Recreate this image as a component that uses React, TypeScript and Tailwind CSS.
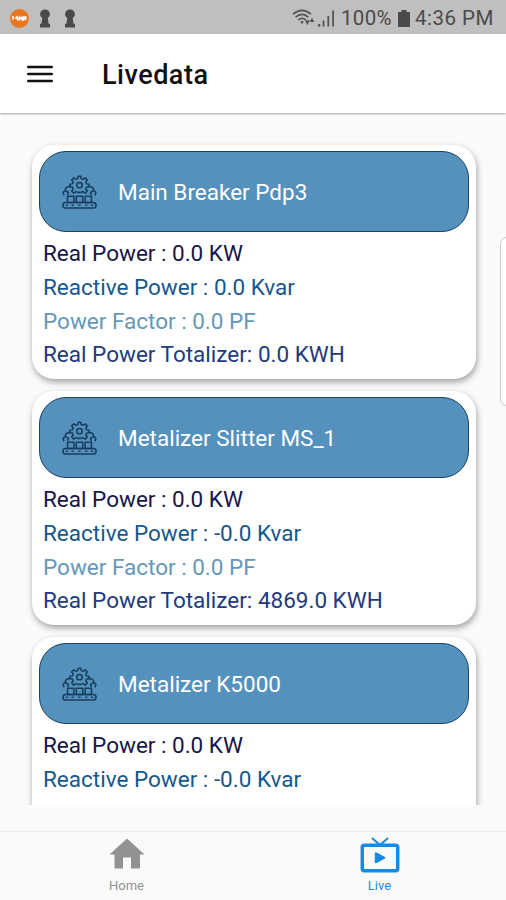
interface Meter {
  name: string;
  realPower: string;
  reactivePower: string;
  powerFactor: string;
  totalizer: string;
}

const meters: Meter[] = [
  {
    name: "Main Breaker Pdp3",
    realPower: "0.0 KW",
    reactivePower: "0.0 Kvar",
    powerFactor: "0.0 PF",
    totalizer: "0.0 KWH",
  },
  {
    name: "Metalizer Slitter MS_1",
    realPower: "0.0 KW",
    reactivePower: "-0.0 Kvar",
    powerFactor: "0.0 PF",
    totalizer: "4869.0 KWH",
  },
  {
    name: "Metalizer K5000",
    realPower: "0.0 KW",
    reactivePower: "-0.0 Kvar",
    powerFactor: "0.0 PF",
    totalizer: "0.0 KWH",
  },
];

function KeyholeIcon() {
  return (
    <svg width="12" height="19" viewBox="0 0 12 19" fill="#4a4a4a">
      <path d="M6 .5a4.8 4.8 0 0 1 4.9 4.7c0 1.700-.9 2.900-2.200 3.600L9.600 14.800h1.400v3.700H1v-3.700h1.400l.9-6C2 8.100 1.100 6.900 1.100 5.200A4.800 4.800 0 0 1 6 .5z" />
    </svg>
  );
}

function WifiIcon() {
  return (
    <svg width="23" height="18" viewBox="0 0 23 18" fill="none" stroke="#555" strokeWidth="1.7">
      <path d="M1 5.2Q10 -2.6 19 5.2M3.600 8.200Q10 2.600 16.400 8.200M6.200 11.100Q10 7.800 13.800 11.100" />
      <path d="M8.200 12.800Q10 11.400 11.800 12.800L10 15z" fill="#555" stroke="none" />
      <path d="M13 11.200h4.800L15.400 16.200zM17.600 13h4.800L20 8.800z" fill="#555" stroke="none" />
    </svg>
  );
}

function SignalIcon() {
  return (
    <svg width="17" height="17" viewBox="0 0 17 17" fill="#555">
      <path d="M0 14h2.2v2.4H0zM4.600 10.500h1.800v5.900H4.600zM9.400 6h1.800v10.400H9.400zM14.200 .5H16v15.900h-1.800z" />
    </svg>
  );
}

function MachineIcon() {
  return (
    <svg
      className="shrink-0"
      width="35"
      height="34"
      viewBox="0 0 36 36"
      preserveAspectRatio="none"
      fill="none"
      stroke="#183e5c"
      strokeWidth="1.6"
      strokeLinejoin="round"
      strokeLinecap="round"
    >
      <path d="M16.300 3.800l.4-2.600h2.600l.4 2.600 2 .8 2.200-1.600 2.200 2.200-1.600 2.200.8 2 2.600.4v2.600l-2.600.4-.8 2 1.600 2.200-2.200 2.200-2.200-1.600-2 .8h-3.400l-2-.8-2.200 1.600-2.200-2.200 1.600-2.200-.8-2-2.600-.4V9.800l2.600-.4.8-2-1.600-2.200L12.100 3l2.200 1.600z" />
      <circle cx="18" cy="10.800" r="2.800" />
      <path d="M8.500 12.300C5 12.300 3.400 14 3.400 16.200L1.200 18.400l.6 2.500M3.400 16.200l3.200 2.100-.6 2.400M27.500 12.300c3.500 0 5.100 1.700 5.100 3.900l2.200 2.200-.6 2.500M32.600 16.200l-3.200 2.100.6 2.400" />
      <path d="M5.700 22.500h6.600v6.700H5.700zM14.700 22.500h6.600v6.700h-6.600zM23.700 22.500h6.600v6.700h-6.600z" />
      <rect x="1" y="29.200" width="34" height="5.800" rx="2.800" />
      <path d="M4.500 32.100h1M10.500 32.100h1M17.500 32.100h1M24.500 32.100h1M30.500 32.100h1" />
    </svg>
  );
}

function StatusBar() {
  return (
    <div className="flex h-[34px] shrink-0 items-center bg-[#bfbfbf] pl-[10px] pr-[10px] pt-[2px] text-[#4a4a4a]">
      <div className="flex items-center">
        <div className="flex size-[19px] items-center justify-center rounded-full bg-[#e9771f]">
          <svg width="15" height="7" viewBox="0 0 15 7" fill="none" stroke="#fff" strokeWidth="1.5">
            <path d="M1 1v3.500M3 3h3.500M4.500 1L6 5.500M7.500 5.500V2L10 4.500V1.500M11.500 6V2h2.300v2h-2" />
          </svg>
        </div>
        <div className="ml-[10px] flex gap-[13px]">
          <KeyholeIcon />
          <KeyholeIcon />
        </div>
      </div>
      <div className="ml-auto flex items-center">
        <WifiIcon />
        <div className="ml-[3px]">
          <SignalIcon />
        </div>
        <span className="ml-[6px] w-[53px] whitespace-nowrap text-[20.5px] leading-8 tracking-[0.3px]">100%</span>
        <svg className="ml-[4px]" width="12" height="17" viewBox="0 0 12 17" fill="#4a4a4a">
          <path d="M3.500 0h5v2H11a1 1 0 0 1 1 1v13a1 1 0 0 1-1 1H1a1 1 0 0 1-1-1V3a1 1 0 0 1 1-1h2.500z" />
        </svg>
        <span className="ml-[5px] w-[81px] whitespace-nowrap text-[20.5px] leading-8 tracking-[0.5px]">
          4:36 PM
        </span>
      </div>
    </div>
  );
}

function Header() {
  return (
    <header className="z-10 flex h-[79px] shrink-0 items-center bg-white pl-[27px] shadow-[0_1px_2px_rgba(0,0,0,0.35)]">
      <svg width="26" height="18" viewBox="0 0 26 18" stroke="#111" strokeWidth="2.4" strokeLinecap="round">
        <path d="M1.200 2h23.600M1.200 9h23.600M1.200 16h23.600" />
      </svg>
      <h1 className="ml-[49px] pt-[2px] text-[27px] font-medium leading-8 tracking-[0.5px] text-[#111]">
        Livedata
      </h1>
    </header>
  );
}

function MeterCard({ meter }: { meter: Meter }) {
  return (
    <article className="h-[234px] shrink-0 rounded-[22px] bg-white px-[7px] pt-[6px] shadow-[1px_3px_6px_rgba(0,0,0,0.36)]">
      <div className="flex h-[81px] items-center rounded-[27px] border border-[#1d4361] bg-[#5591bd] pl-[22px]">
        <MachineIcon />
        <h2 className="ml-[21px] pt-[2px] text-[22.5px] text-white">{meter.name}</h2>
      </div>
      <div className="pl-[4px] pt-[5px] text-[22.5px] leading-[33.8px] whitespace-nowrap">
        <p className="text-[#17164a]">Real Power : {meter.realPower}</p>
        <p className="text-[#15578e]">Reactive Power : {meter.reactivePower}</p>
        <p className="text-[#6598b8]">Power Factor : {meter.powerFactor}</p>
        <p className="text-[#233a7c]">Real Power Totalizer: {meter.totalizer}</p>
      </div>
    </article>
  );
}

function TabBar() {
  return (
    <nav className="grid h-[69px] shrink-0 grid-cols-2 border-t border-[#ececec] text-[13px] leading-4">
      <div className="flex flex-col items-center pt-[5px] text-[#929292]">
        <svg width="36" height="34" viewBox="0 0 36 34" fill="#929292">
          <path d="M18 1.500L35.500 17.500H31V31.500H22V20.500H14V31.500H5.500V17.500H.5z" />
        </svg>
        <span className="mt-[7px]">Home</span>
      </div>
      <div className="flex flex-col items-center pt-[5px] text-[#258bdd]">
        <svg width="40" height="36" viewBox="0 0 40 36" fill="none" stroke="#168be5" strokeLinejoin="round">
          <rect x="2.300" y="8.300" width="35.400" height="25.400" rx="2" strokeWidth="3.5" />
          <path d="M12 1l8 7 8-7" strokeWidth="2" />
          <path d="M16 16.500v8.500l8-4.250z" fill="#168be5" strokeWidth="2.5" />
        </svg>
        <span className="mt-[5px]">Live</span>
      </div>
    </nav>
  );
}

export default function App() {
  return (
    <div className="relative flex h-[900px] w-[506px] flex-col overflow-hidden bg-[#fafafa] font-[Roboto,sans-serif]">
      <StatusBar />
      <Header />
      <main className="flex h-[692px] shrink-0 flex-col gap-3 overflow-hidden pl-8 pr-[30px] pt-8">
        {meters.map((meter) => (
          <MeterCard key={meter.name} meter={meter} />
        ))}
      </main>
      <div className="h-[26px] shrink-0" />
      <TabBar />
      {/* edge panel handle */}
      <div className="absolute -right-2 top-[237px] h-[169px] w-[14px] rounded-[7px] border border-[#c8c8c8] bg-white" />
    </div>
  );
}
